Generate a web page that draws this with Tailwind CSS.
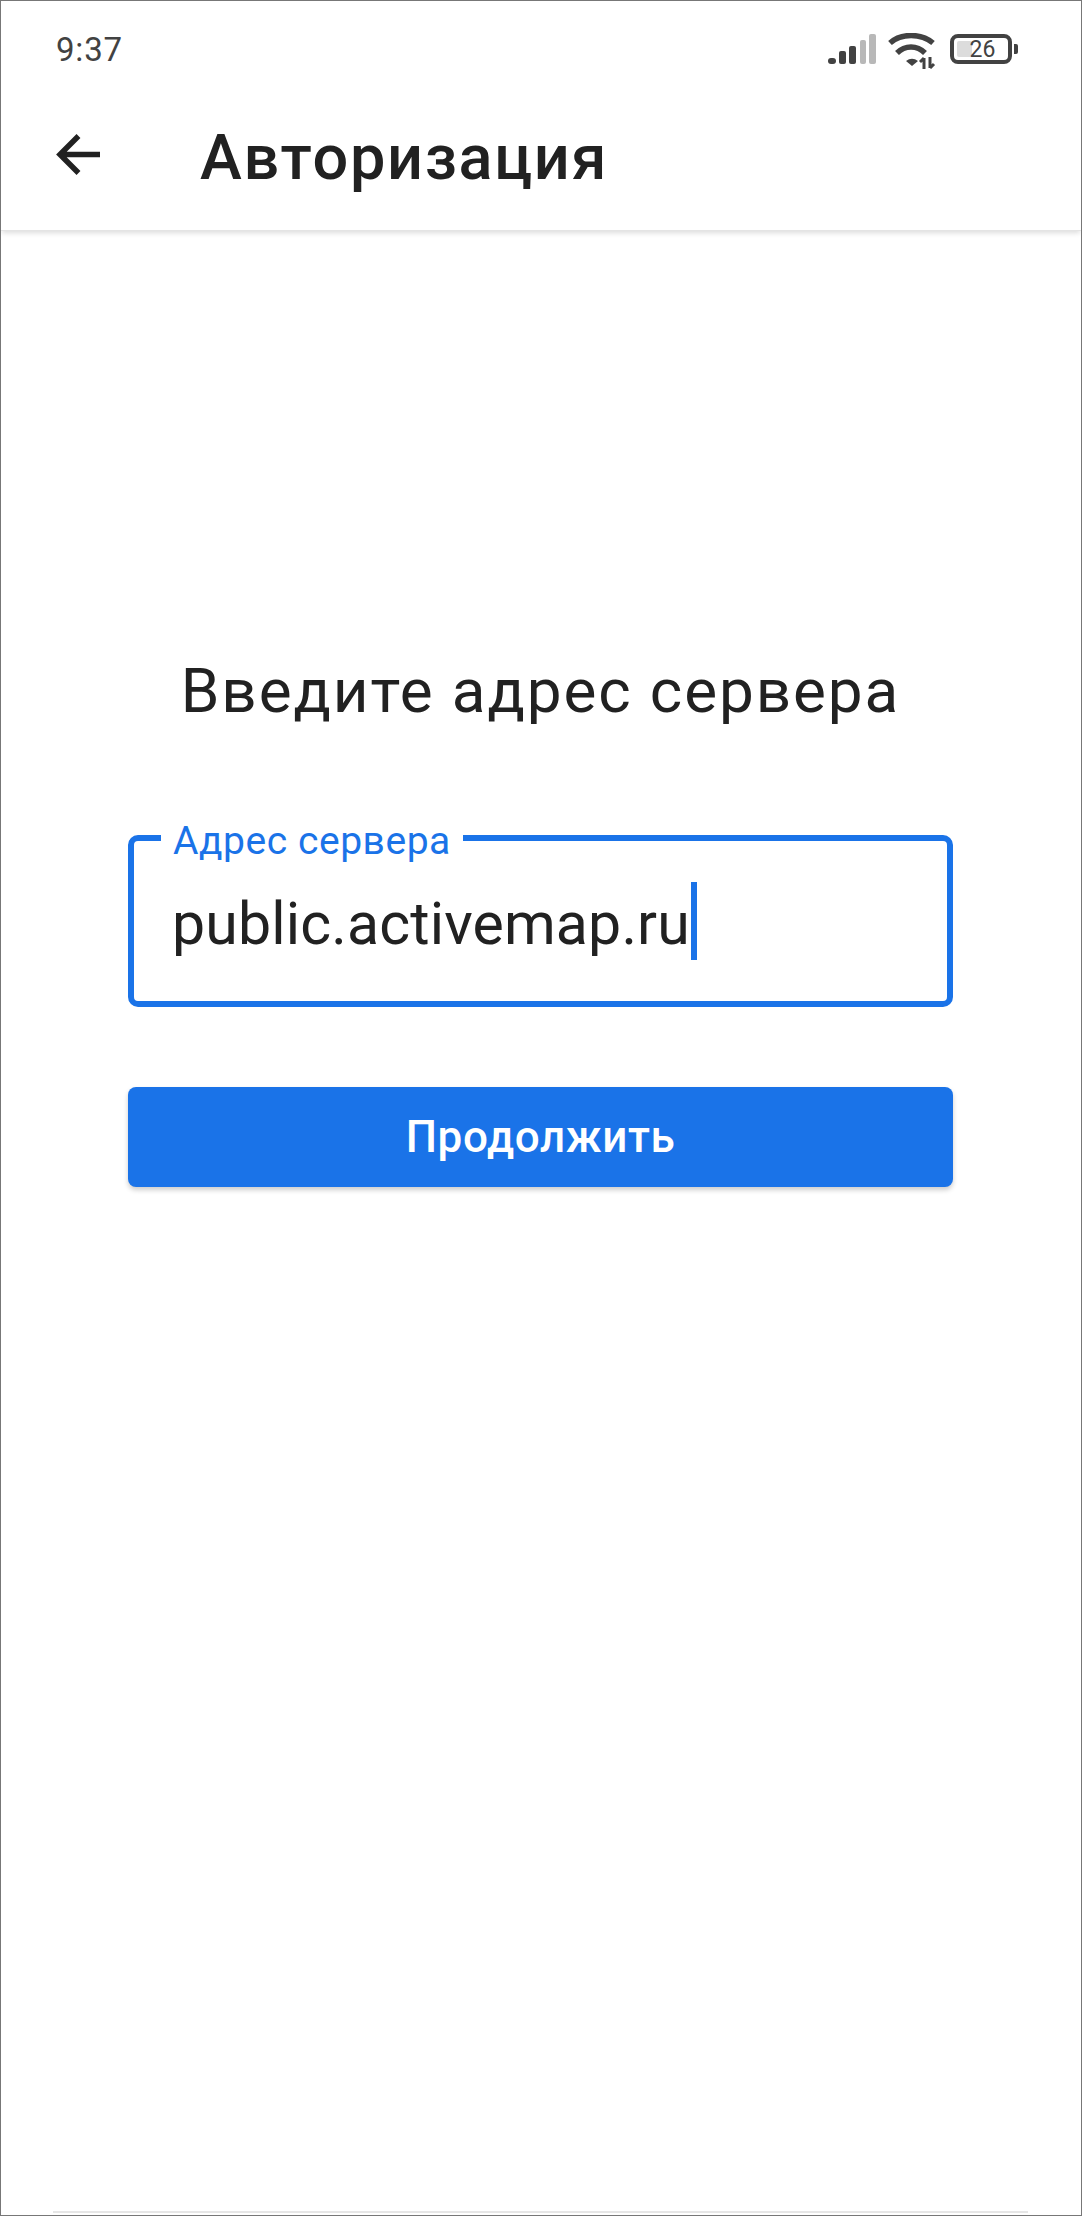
<!DOCTYPE html>
<html>
<head>
<meta charset="utf-8">
<script src="https://cdn.jsdelivr.net/npm/@tailwindcss/browser@4"></script>
</head>
<body class="bg-white">
<div class="w-[1082px] h-[2216px] border border-[#777777] bg-white flex flex-col text-[#212121] font-['Roboto',sans-serif] overflow-hidden">
  <div class="h-[96px] shrink-0 flex items-center justify-between pl-[55px] pr-[63px] bg-white relative z-10">
    <span class="text-[33px] leading-none text-[#424242] tracking-[0.8px]">9:37</span>
    <div class="flex items-center">
      <svg width="49" height="30" viewBox="0 0 49 30" class="block"><g fill="#424242"><rect x="0" y="24" width="8" height="6" rx="3"/><rect x="11" y="17" width="7" height="13" rx="2"/><rect x="21" y="12" width="7" height="18" rx="2"/></g><g fill="#b8b8b8"><rect x="32" y="6" width="6" height="24" rx="2"/><rect x="41" y="0" width="7" height="30" rx="2"/></g></svg>
      <svg width="50" height="36" viewBox="0 0 50 36" class="block ml-[10px] mt-[4px]"><g fill="none" stroke="#424242" stroke-width="5.5"><path d="M3 10 C14 0 34 0 46 10"/><path d="M10 20 C18 12 30 12 38 20"/></g><path d="M19 28 Q25 23.5 31 28 L25 33 Z" fill="#424242"/><path d="M37 36 V25 M33 29 L37 25 M43 24 V35 M43 35 L47 31" stroke="#424242" stroke-width="3" fill="none"/></svg>
      <div class="flex items-center ml-[13px]">
        <div class="relative w-[62px] h-[30px] rounded-[8px] border-[4px] border-[#424242] flex items-center justify-center">
          <div class="absolute left-[3px] top-[3px] bottom-[3px] w-[15px] bg-[#dcdcdc] rounded-[2px]"></div>
          <span class="relative text-[23px] leading-none text-[#424242] pl-[3px]">26</span>
        </div>
        <div class="w-[4px] h-[10px] ml-[2px] bg-[#424242] rounded-r-[2px]"></div>
      </div>
    </div>
  </div>
  <div class="h-[134px] shrink-0 flex items-center pl-[54px] pb-[18px] shadow-[0_3px_5px_-1px_rgba(0,0,0,0.14)] border-b border-[#e4e4e4] relative">
    <svg width="46" height="46" viewBox="0 0 46 46" class="block shrink-0"><path d="M45 22.5 H6 M23.5 4 L5 22.5 L23.5 41" fill="none" stroke="#212121" stroke-width="5.5"/></svg>
    <h1 class="ml-[99px] mt-[5px] text-[63px] leading-none font-medium tracking-[1.7px]">Авторизация</h1>
  </div>
  <main class="flex flex-col flex-1 pl-[127px] pr-[128px] pt-[424px]">
    <h2 class="text-center text-[62px] leading-[72px] tracking-[1.9px] text-[#212121] whitespace-nowrap">Введите адрес сервера</h2>
    <div class="relative mt-[108px] h-[172px] rounded-[10px] border-[6px] border-[#1a73e8] flex items-start pl-[38px] pt-[41px]">
      <span class="absolute left-[27px] -top-[18px] bg-white px-[12px] text-[39px] leading-[36px] text-[#1a73e8] tracking-[0.55px]">Адрес сервера</span>
      <span class="text-[59px] leading-[84px] h-[78px] text-[#212121] tracking-[0.15px]">public.activemap.ru</span>
      <span class="w-[6px] h-[78px] bg-[#1a73e8] ml-[1px]"></span>
    </div>
    <button class="mt-[80px] h-[100px] w-full rounded-[8px] bg-[#1a73e8] text-white text-[44px] font-medium tracking-[0.6px] shadow-[0_3px_5px_rgba(0,0,0,0.2)]">Продолжить</button>
  </main>
  <div class="h-[2px] ml-[52px] mr-[53px] mb-[2px] bg-[#e6e6e6]"></div>
</div>
</body>
</html>
